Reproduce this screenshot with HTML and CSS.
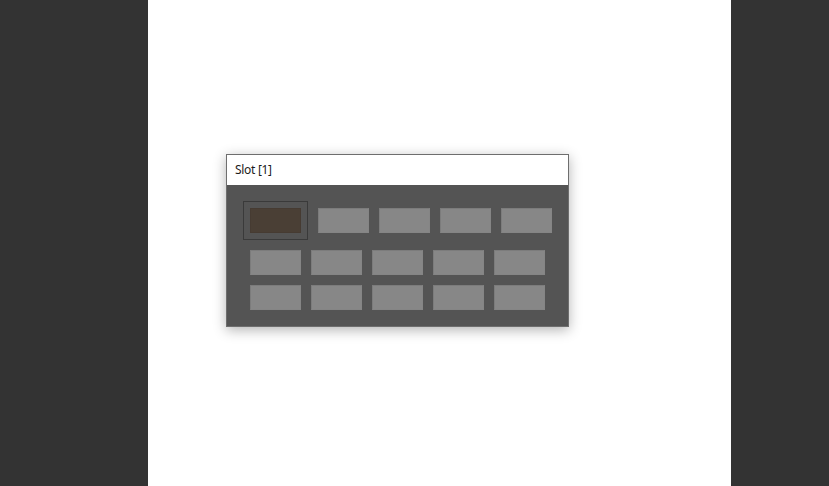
FILE: index.html
```html
<!DOCTYPE html>
<html>
<head>
<meta charset="utf-8">
<link rel="stylesheet" href="styles.css">
</head>
<body>
<div class="page">
  <div class="side side-left"></div>
  <div class="canvas">
    <div class="dialog">
      <div class="title">Slot [1]</div>
      <div class="body">
        <div class="row row-first">
          <div class="slot selected"><div class="tile brown"></div></div>
          <div class="tile"></div>
          <div class="tile"></div>
          <div class="tile"></div>
          <div class="tile"></div>
        </div>
        <div class="row">
          <div class="tile"></div>
          <div class="tile"></div>
          <div class="tile"></div>
          <div class="tile"></div>
          <div class="tile"></div>
        </div>
        <div class="row">
          <div class="tile"></div>
          <div class="tile"></div>
          <div class="tile"></div>
          <div class="tile"></div>
          <div class="tile"></div>
        </div>
      </div>
    </div>
  </div>
  <div class="side side-right"></div>
</div>
</body>
</html>
```

FILE: styles.css
```css
html, body {
  margin: 0;
  padding: 0;
  height: 100%;
  overflow: hidden;
}
.page {
  display: flex;
  width: 829px;
  height: 486px;
}
.side {
  background: #333333;
  height: 100%;
}
.side-left { width: 148px; }
.side-right { width: 98px; }
.canvas {
  width: 583px;
  height: 100%;
  background: #ffffff;
  padding: 154px 0 0 78px;
  box-sizing: border-box;
}
.dialog {
  width: 343px;
  box-sizing: border-box;
  border: 1px solid #6e6e6e;
  box-shadow: 0 3px 12px rgba(0, 0, 0, 0.3);
}
.title {
  height: 30px;
  background: #ffffff;
  font-family: "Noto Sans", "Open Sans", sans-serif;
  font-size: 12px;
  letter-spacing: -0.3px;
  line-height: 30px;
  color: #1b1b1b;
  padding-left: 8px;
}
.body {
  background: #545454;
  height: 141px;
  box-sizing: border-box;
  padding: 16px 0 0 16px;
  display: flex;
  flex-direction: column;
  gap: 10px;
}
.row {
  display: flex;
  gap: 10px;
  padding-left: 7px;
}
.row-first {
  align-items: center;
  padding-left: 0;
}
.tile {
  width: 51px;
  height: 25px;
  box-sizing: border-box;
  background: #878787;
  border: 1px solid #7c7c7c;
  border-right-color: #858585;
  border-bottom-color: #858585;
}
.slot.selected {
  border: 1px solid #3a3a3a;
  padding: 6px;
}
.tile.brown {
  background: #4a3f35;
  border-color: #463b32;
}
```
